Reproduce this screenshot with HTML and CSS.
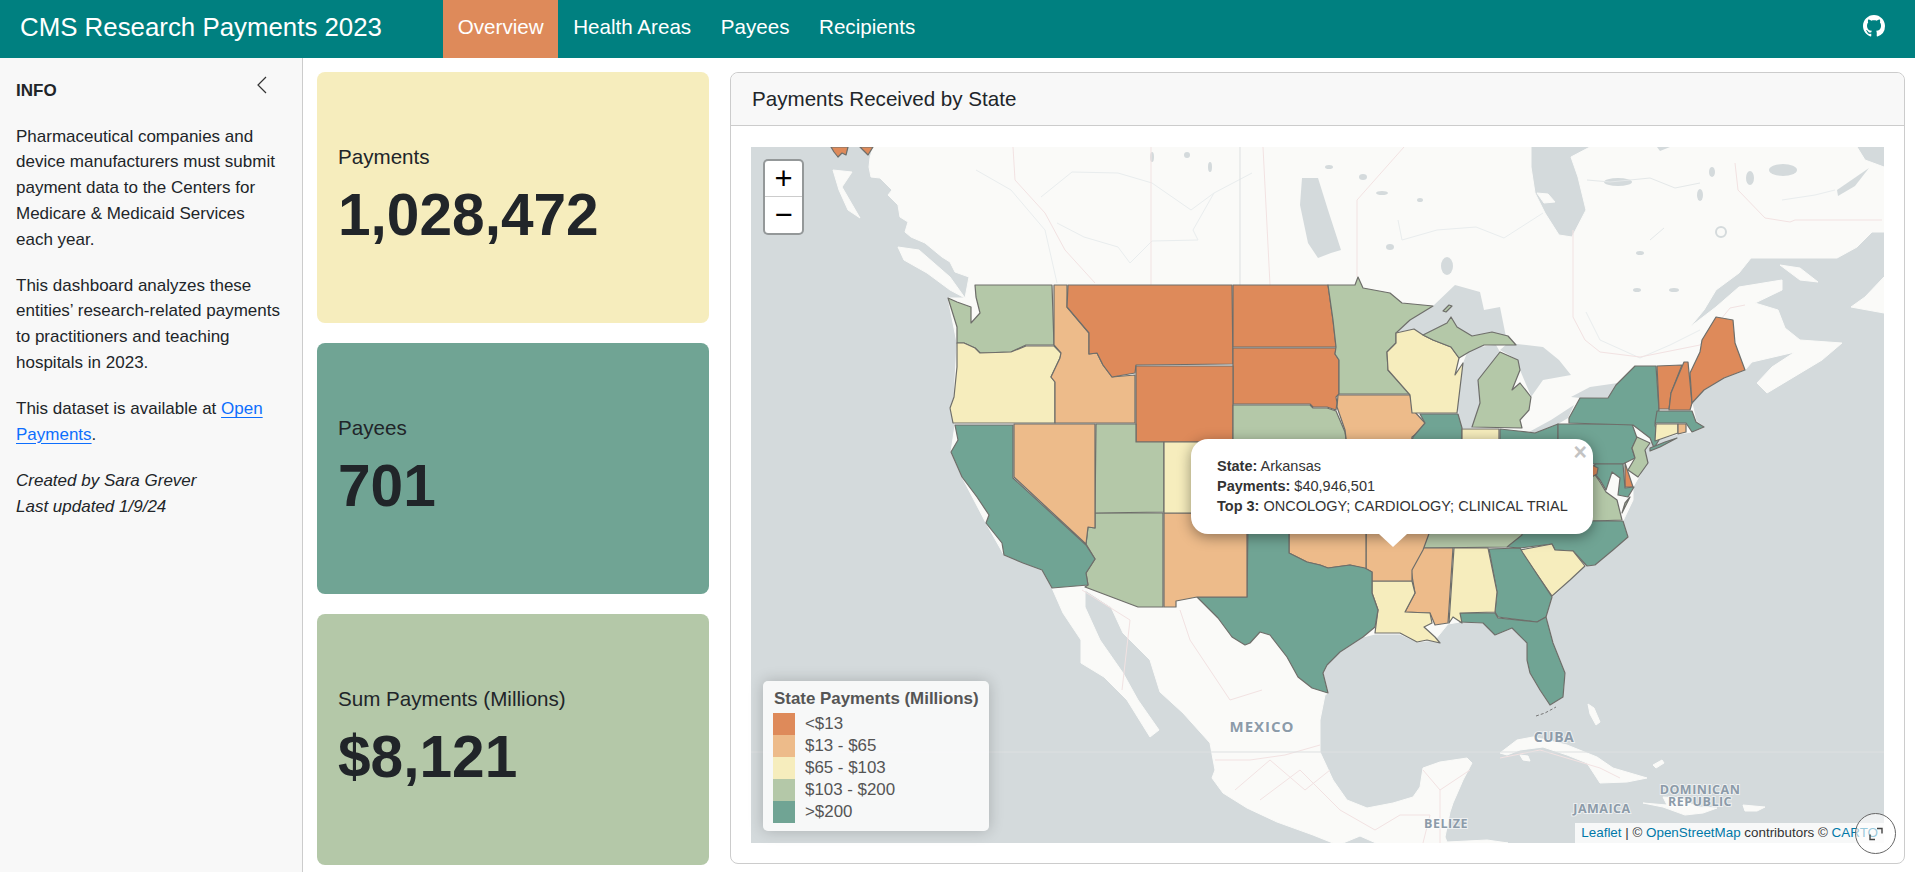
FILE: index.html
```html
<!DOCTYPE html>
<html lang="en">
<head>
  <meta charset="UTF-8">
  <title>CMS Research Payments 2023</title>
  <link rel="stylesheet" href="styles.css">
</head>
<body>

  <header class="navbar">
    <span class="brand">CMS Research Payments 2023</span>
    <nav class="nav-links">
      <a class="nav-link active" href="#">Overview</a>
      <a class="nav-link" href="#">Health Areas</a>
      <a class="nav-link" href="#">Payees</a>
      <a class="nav-link" href="#">Recipients</a>
    </nav>
    <a class="github" href="#" aria-label="GitHub">
      <svg viewBox="0 0 16 16" width="22" height="22"><path d="M8 0C3.58 0 0 3.58 0 8c0 3.54 2.29 6.53 5.47 7.59.4.07.55-.17.55-.38 0-.19-.01-.82-.01-1.49-2.01.37-2.53-.49-2.69-.94-.09-.23-.48-.94-.82-1.13-.28-.15-.68-.52-.01-.53.63-.01 1.08.58 1.23.82.72 1.21 1.87.87 2.33.66.07-.52.28-.87.51-1.07-1.78-.2-3.64-.89-3.64-3.95 0-.87.31-1.59.82-2.15-.08-.2-.36-1.02.08-2.12 0 0 .67-.21 2.2.82.64-.18 1.32-.27 2-.27.68 0 1.36.09 2 .27 1.53-1.04 2.2-.82 2.2-.82.44 1.1.16 1.92.08 2.12.51.56.82 1.27.82 2.15 0 3.07-1.87 3.75-3.65 3.95.29.25.54.73.54 1.48 0 1.07-.01 1.93-.01 2.2 0 .21.15.46.55.38A8.013 8.013 0 0016 8c0-4.42-3.58-8-8-8z"/></svg>
    </a>
  </header>

  <div class="page">
    <aside class="sidebar">
      <div class="sidebar-head">
        <h2>INFO</h2>
        <svg class="collapse-icon" viewBox="0 0 12 18" width="12" height="18"><path d="M10 1 2 9l8 8"/></svg>
      </div>
      <p>Pharmaceutical companies and device manufacturers must submit payment data to the Centers for Medicare &amp; Medicaid Services each year.</p>
      <p>This dashboard analyzes these entities’ research-related payments to practitioners and teaching hospitals in 2023.</p>
      <p>This dataset is available at <a href="#">Open Payments</a>.</p>
      <p><em>Created by Sara Grever<br>Last updated 1/9/24</em></p>
    </aside>

    <main class="content">
      <section class="value-boxes">
        <div class="value-box box-yellow">
          <div class="box-label">Payments</div>
          <div class="box-value">1,028,472</div>
        </div>
        <div class="value-box box-teal">
          <div class="box-label">Payees</div>
          <div class="box-value">701</div>
        </div>
        <div class="value-box box-green">
          <div class="box-label">Sum Payments (Millions)</div>
          <div class="box-value">$8,121</div>
        </div>
      </section>

      <section class="card">
        <div class="card-header">Payments Received by State</div>
        <div class="card-body">
          <div class="map">
            <svg class="map-svg" viewBox="751 147 1133 696" width="1133" height="696">
              <rect class="water" x="751" y="147" width="1133" height="696"/>

              <!-- land -->
              <polygon class="land" points="873,147 1531,147 1531,167 1535,193 1545,213 1559,235 1572,237 1586,210 1578,177 1571,157 1590,147 1857,147 1865,160 1884,167 1884,232 1872,232 1857,247 1837,258 1751,258 1739,273 1716,290 1704,310 1690,327 1716,307 1739,287 1782,280 1782,290 1755,303 1778,310 1785,328 1800,340 1842,343 1822,360 1767,393 1757,383 1772,367 1795,352 1752,362 1745,370 1723,378 1704,390 1692,403 1696,421 1704,427 1692,432 1678,434 1655,440 1640,450 1645,455 1640,475 1633,487 1633,500 1623,521 1628,537 1613,550 1595,565 1585,566 1570,580 1552,597 1546,617 1553,643 1565,673 1563,697 1550,705 1540,690 1530,673 1527,660 1527,643 1512,628 1495,635 1483,623 1460,622 1448,624 1435,640 1417,642 1400,634 1375,634 1363,637 1340,652 1327,665 1323,673 1328,693 1325,695 1320,720 1320,752 1333,780 1347,800 1367,808 1393,803 1413,797 1420,787 1423,768 1440,762 1467,758 1472,763 1463,780 1460,787 1453,803 1450,812 1445,837 1447,842 1487,840 1508,843 1376,843 1360,836 1343,843 1333,843 1313,835 1277,822 1247,808 1223,793 1212,778 1215,770 1210,743 1183,713 1160,692 1150,660 1123,633 1111,607 1085,590 1085,607 1100,640 1123,673 1138,700 1159,730 1150,737 1127,700 1104,677 1081,663 1081,640 1063,613 1052,588 1042,570 1004,555 986,523 962,477 951,452 955,425 950,408 954,397 957,343 948,298 965,298 969,277 955,272 950,262 942,257 925,243 911,237 905,232 908,222 900,217 898,205 888,195 892,190 880,178 871,177 869,167 870,158"/>
              <polygon class="land" points="898,247 919,250 950,277 965,298 950,290 927,273 904,260"/>
              <polygon class="land" points="833,170 852,172 842,187 860,218 848,210 839,190"/>
              <polygon class="land" points="1851,307 1865,297 1884,277 1884,313"/>
              <polygon class="land" points="1780,265 1800,268 1818,282 1800,280"/>
              <polygon class="land" points="1537,193 1548,194 1555,202 1544,203"/>
              <polygon class="land" points="1500,753 1517,740 1533,737 1567,745 1597,757 1613,768 1647,778 1627,782 1600,783 1587,763 1567,755 1543,747 1520,750 1507,755"/>
              <polygon class="land" points="1643,803 1667,805 1663,797 1680,798 1697,807 1717,808 1703,813 1685,815 1663,807"/>
              <polygon class="land" points="1743,805 1765,807 1757,811 1745,811"/>
              <polygon class="land" points="1520,755 1528,756 1530,761 1523,760"/>
              <polygon class="land" points="1588,704 1594,708 1600,722 1596,725 1590,714"/>
              <polygon class="land" points="1653,765 1662,760 1664,763 1656,768"/>

              <!-- lakes and rivers -->
              <polygon class="water" points="1433,306 1455,285 1480,292 1484,310 1500,307 1504,327 1506,337 1492,332 1472,336 1457,327 1451,317 1447,323 1423,335 1414,329 1398,332 1410,320"/>
              <polygon class="water" points="1469,348 1496,345 1500,352 1478,380 1480,403 1472,428 1461,428 1457,403 1463,363"/>
              <polygon class="water" points="1508,343 1543,347 1559,360 1571,375 1543,380 1531,397 1529,410 1520,420 1531,396 1520,370 1518,360 1500,350"/>
              <polygon class="water" points="1574,405 1551,420 1529,432 1535,433 1558,424 1568,418"/>
              <polygon class="water" points="1571,397 1590,387 1618,383 1610,397 1580,398"/>
              <polygon class="water" points="1302,178 1318,178 1328,210 1341,250 1331,253 1318,258 1308,243 1300,205"/>
              <polygon class="water" points="1657,147 1670,147 1660,151"/>
              <ellipse class="water" cx="1447" cy="266" rx="6" ry="9"/>
              <ellipse class="water" cx="1618" cy="182" rx="14" ry="4"/>
              <ellipse class="water" cx="1783" cy="170" rx="14" ry="6"/>
              <ellipse class="water" cx="1750" cy="178" rx="4" ry="7"/>
              <polygon class="water" points="1837,190 1869,168 1855,186 1838,196"/>
              <ellipse class="water" cx="1722" cy="292" rx="3" ry="3"/>
              <circle class="ring" cx="1721" cy="232" r="5"/>
              <ellipse class="water" cx="1152" cy="157" rx="2" ry="5"/>
              <ellipse class="water" cx="1187" cy="155" rx="3" ry="3"/>
              <ellipse class="water" cx="1210" cy="167" rx="2" ry="5"/>
              <ellipse class="water" cx="1329" cy="167" rx="4" ry="2"/>
              <ellipse class="water" cx="1363" cy="177" rx="4" ry="3"/>
              <ellipse class="water" cx="1382" cy="193" rx="6" ry="2"/>
              <ellipse class="water" cx="1420" cy="200" rx="3" ry="2"/>
              <ellipse class="water" cx="1390" cy="247" rx="4" ry="3"/>
              <ellipse class="water" cx="1674" cy="290" rx="5" ry="2"/>
              <ellipse class="water" cx="1637" cy="290" rx="4" ry="2"/>
              <ellipse class="water" cx="1640" cy="253" rx="4" ry="2"/>
              <ellipse class="water" cx="1700" cy="195" rx="3" ry="6"/>
              <ellipse class="water" cx="1712" cy="172" rx="3" ry="5"/>
              <path class="water-line" d="M1587 180 1610 182 1650 178 1675 188 1700 183 M1650 240 1664 228"/>
              <path class="river" d="M976 170 1011 190 1045 230 1057 283 M1041 197 1072 172 1118 173 1152 183 1191 210 1214 193 1252 173 M1057 223 1084 237 1118 247 1130 263 1152 241 1198 240 1193 230 1214 193 M1398 220 1402 240 1437 230 1476 227 1504 238 1543 213 M1586 312 1600 340 1640 358 1670 345 1700 330 M1782 200 1815 195 1835 190"/>
              <path class="border" d="M1013 147 1015 180 1045 213 1065 250 1095 283 M1151 147 1151 285 M1263 147 1270 285 M1404 147 1357 200 1357 277 M1573 230 1573 317 1585 340 1600 352 1640 357 M1735 163 1738 190 1765 218 1790 222 1795 220 1882 220 M1640 357 1700 345 1730 308 1745 305 M1082 590 1130 620 1122 690 M1180 610 1190 640 1230 700 1262 690 M1215 760 1250 760 1285 755 1320 745 M1235 790 1270 760 1305 790 1330 770 M1260 800 1300 770 1340 810 1375 830 1400 815 1430 815 1423 843 M1423 770 1440 790 1470 770 M1440 790 1440 843 M1500 758 1540 750 1600 768 1620 778"/>
              <path class="seam" d="M751 752H1884 M1240 147V285"/>

              <!-- alaska tip -->
              <polygon class="tier-1" points="831,147 848,147 846,155 842,153 838,157 834,152"/>
              <polygon class="tier-1" points="860,147 873,147 868,155 864,151"/>

              <!-- states -->
              <polygon class="tier-4" points="975,285 1052,285 1054,345 1026,345 1011,352 980,353 975,348 964,343 957,343 957,327 948,298 957,302 971,307 971,323 980,313 976,297"/>
              <polygon class="tier-3" points="957,343 964,343 975,348 980,353 1011,352 1026,346 1054,346 1061,353 1060,358 1051,377 1055,382 1055,423 953,423 950,408 954,397 957,367"/>
              <polygon class="tier-2" points="1054,285 1067,285 1067,307 1078,320 1089,333 1089,354 1097,353 1103,365 1112,377 1135,375 1135,423 1055,423 1055,382 1051,377 1060,358 1061,353 1054,345"/>
              <polygon class="tier-1" points="1068,285 1232,285 1233,364 1136,365 1135,373 1112,377 1103,365 1097,353 1089,354 1089,333 1078,320 1067,307"/>
              <polygon class="tier-1" points="1233,285 1328,285 1333,320 1336,347 1233,347"/>
              <polygon class="tier-1" points="1233,348 1336,348 1335,354 1339,360 1339,394 1336,397 1337,403 1336,410 1327,407 1313,407 1310,404 1233,404"/>
              <polygon class="tier-1" points="1136,366 1233,366 1233,442 1136,442"/>
              <polygon class="tier-4" points="1233,405 1310,405 1313,408 1327,408 1336,411 1345,432 1347,446 1233,446"/>
              <polygon class="tier-4" points="1328,285 1355,285 1358,277 1363,288 1390,293 1402,303 1433,306 1410,320 1396,333 1396,343 1387,352 1388,370 1410,394 1339,394 1339,360 1335,354 1336,347 1333,320"/>
              <polygon class="tier-2" points="1338,395 1410,395 1413,410 1425,423 1422,430 1412,437 1411,446 1347,446 1345,430 1337,407"/>
              <polygon class="tier-3" points="1396,333 1414,329 1423,335 1433,340 1451,347 1459,358 1455,375 1463,363 1457,413 1412,413 1410,395 1388,370 1387,352 1396,343"/>
              <polygon class="tier-4" points="1423,335 1447,323 1451,317 1457,327 1472,336 1492,332 1508,336 1516,345 1500,345 1484,345 1469,352 1459,358 1451,347 1433,340"/>
              <polygon class="tier-4" points="1472,427 1480,403 1478,380 1500,352 1518,360 1520,370 1512,390 1520,383 1531,397 1529,410 1520,420 1522,428"/>
              <polygon class="tier-4" points="1443,311 1449,305 1452,306 1446,312"/>
              <polygon class="tier-5" points="1420,414 1458,414 1462,428 1462,446 1411,446 1413,437 1425,423"/>
              <polygon class="tier-3" points="1462,429 1499,429 1499,446 1462,446"/>
              <polygon class="tier-5" points="1500,429 1518,431 1535,433 1558,424 1558,446 1500,446"/>
              <polygon class="tier-5" points="1558,424 1632,424 1637,438 1632,448 1635,458 1623,464 1593,464 1558,464"/>
              <polygon class="tier-5" points="1569,423 1569,418 1580,398 1608,398 1616,385 1635,366 1656,366 1659,410 1655,425 1659,440 1654,448 1650,438 1633,425"/>
              <polygon class="tier-5" points="1650,448 1665,442 1677,438 1660,447 1650,451"/>
              <polygon class="tier-1" points="1657,366 1682,365 1671,393 1669,409 1659,409"/>
              <polygon class="tier-1" points="1684,362 1688,362 1692,403 1690,410 1669,410 1671,393"/>
              <polygon class="tier-1" points="1690,373 1700,352 1702,340 1716,317 1733,320 1735,343 1745,370 1724,378 1704,390 1692,403"/>
              <polygon class="tier-5" points="1657,411 1692,411 1696,422 1704,427 1692,432 1686,423 1655,423"/>
              <polygon class="tier-3" points="1656,424 1678,424 1678,433 1655,441"/>
              <polygon class="tier-2" points="1678,424 1686,424 1686,432 1678,434"/>
              <polygon class="tier-4" points="1637,437 1650,443 1645,450 1648,463 1638,477 1628,470 1635,458 1632,448"/>
              <polygon class="tier-1" points="1625,463 1633,487 1625,487"/>
              <polygon class="tier-5" points="1595,464 1623,464 1625,488 1634,487 1628,497 1618,495 1620,478 1612,472 1606,490 1600,480 1593,472"/>
              <polygon class="tier-4" points="1593,472 1600,482 1606,492 1617,500 1622,520 1593,521 1545,521 1540,500 1570,490 1580,478"/>
              <polygon class="tier-4" points="1625,503 1630,497 1622,513"/>
              <polygon class="tier-1" points="1590,464 1598,468 1597,474 1590,478"/>
              <polygon class="tier-5" points="1507,547 1522,532 1545,521 1623,521 1628,537 1613,550 1595,565 1587,566 1573,551 1555,550 1552,544 1520,548"/>
              <polygon class="tier-4" points="1430,530 1522,530 1522,535 1507,547 1423,548"/>
              <polygon class="tier-3" points="1520,550 1552,544 1555,550 1573,551 1585,566 1570,580 1552,596"/>
              <polygon class="tier-5" points="1489,549 1520,548 1523,553 1552,597 1546,617 1537,622 1498,617 1495,612 1497,592"/>
              <polygon class="tier-5" points="1460,613 1495,613 1498,618 1537,622 1546,617 1553,643 1565,673 1563,697 1550,705 1540,690 1530,673 1527,660 1527,643 1512,628 1495,635 1483,623 1460,622"/>
              <polygon class="tier-3" points="1454,548 1488,548 1497,592 1495,612 1460,613 1462,623 1453,617 1449,623"/>
              <polygon class="tier-2" points="1415,548 1453,548 1448,623 1435,625 1430,613 1405,612 1415,593 1411,570"/>
              <polygon class="tier-3" points="1372,581 1412,581 1415,593 1405,612 1430,613 1432,623 1424,627 1435,637 1440,643 1427,640 1417,642 1400,633 1375,633 1378,610 1372,593"/>
              <polygon class="tier-2" points="1366,520 1434,520 1423,550 1412,570 1412,581 1372,581 1372,572 1366,569"/>
              <polygon class="tier-2" points="1289,520 1366,520 1366,569 1350,565 1328,568 1320,565 1307,562 1289,553"/>
              <polygon class="tier-5" points="1248,520 1289,520 1289,553 1307,562 1320,565 1328,568 1350,565 1365,568 1372,572 1372,593 1378,610 1375,627 1363,637 1340,652 1327,665 1323,673 1328,693 1312,688 1298,677 1287,657 1270,635 1260,632 1250,643 1245,645 1232,637 1218,618 1197,597 1247,597"/>
              <polygon class="tier-2" points="1164,513 1247,513 1247,597 1197,597 1176,601 1176,607 1164,607"/>
              <polygon class="tier-4" points="1095,513 1163,513 1163,607 1138,607 1085,587 1088,585 1086,573 1095,559 1086,544 1088,527 1095,528"/>
              <polygon class="tier-4" points="1096,424 1136,424 1136,442 1164,442 1164,512 1095,513"/>
              <polygon class="tier-3" points="1164,442 1290,442 1290,513 1164,513"/>
              <polygon class="tier-2" points="1014,424 1095,424 1095,528 1088,527 1086,544 1014,477"/>
              <polygon class="tier-5" points="955,425 1013,425 1013,478 1086,545 1095,559 1086,573 1088,585 1052,588 1042,570 1023,563 1004,555 1002,543 986,523 989,515 977,497 962,477 951,452 958,440"/>
              <path class="keys" d="M1536 716 1545 713 1556 707"/>

              <!-- place labels -->
              <text class="place place-lg" x="1262" y="732">MEXICO</text>
              <text class="place" x="1554" y="742">CUBA</text>
              <text class="place place-sm" x="1446" y="828">BELIZE</text>
              <text class="place place-sm" x="1700" y="794">DOMINICAN</text>
              <text class="place place-sm" x="1700" y="806">REPUBLIC</text>
              <text class="place place-sm" x="1602" y="813">JAMAICA</text>
            </svg>

            <div class="zoom-control">
              <a href="#">+</a>
              <a href="#">−</a>
            </div>

            <div class="legend">
              <div class="legend-title">State Payments (Millions)</div>
              <div class="legend-row"><i class="swatch tier-bg-1"></i>&lt;$13</div>
              <div class="legend-row"><i class="swatch tier-bg-2"></i>$13 - $65</div>
              <div class="legend-row"><i class="swatch tier-bg-3"></i>$65 - $103</div>
              <div class="legend-row"><i class="swatch tier-bg-4"></i>$103 - $200</div>
              <div class="legend-row"><i class="swatch tier-bg-5"></i>&gt;$200</div>
            </div>

            <div class="popup">
              <span class="popup-close">×</span>
              <div><b>State:</b> Arkansas</div>
              <div><b>Payments:</b> $40,946,501</div>
              <div><b>Top 3:</b> ONCOLOGY; CARDIOLOGY; CLINICAL TRIAL</div>
              <span class="popup-tip"></span>
            </div>

            <div class="attribution"><a href="#">Leaflet</a> | © <a href="#">OpenStreetMap</a> contributors © <a href="#">CARTO</a></div>

            <button class="expand" aria-label="Expand">
              <svg viewBox="0 0 16 16" width="16" height="16"><path d="M9 2.5h5v5 M7 13.5H2v-5"/></svg>
            </button>
          </div>
        </div>
      </section>
    </main>
  </div>

</body>
</html>
```

FILE: styles.css
```css
* {
  box-sizing: border-box;
}

html, body {
  height: 100%;
}

body {
  margin: 0;
  font-family: "Liberation Sans", Arial, sans-serif;
  font-size: 17px;
  line-height: 25.7px;
  color: #212529;
  background: #fff;
  overflow: hidden;
  display: flex;
  flex-direction: column;
}

.navbar {
  flex: 0 0 58px;
  display: flex;
  align-items: stretch;
  background: #008080;
  color: #fff;
  padding-left: 20px;
  padding-right: 30px;
}

.brand {
  font-size: 25.85px;
  line-height: 54px;
  width: 423px;
}

.nav-links {
  display: flex;
  flex: 1;
}

.nav-link {
  color: #fff;
  text-decoration: none;
  font-size: 20.6px;
  line-height: 54px;
  padding: 0 14.8px;
}

.nav-link.active {
  background: #de8a5a;
}

.github {
  display: flex;
  align-items: center;
  padding-bottom: 6px;
}

.github svg {
  fill: #fff;
}

.page {
  flex: 1;
  display: flex;
  min-height: 0;
}

.sidebar {
  flex: 0 0 303px;
  background: #f8f8f8;
  border-right: 1px solid #ccc;
  padding: 15px 16px;
}

.sidebar-head {
  display: flex;
  justify-content: space-between;
  align-items: flex-start;
  margin-bottom: 20px;
}

.sidebar h2 {
  margin: 5px 0 0;
  font-size: 17px;
  font-weight: 700;
  line-height: 25.7px;
}

.collapse-icon {
  margin: 3px 18px 0 0;
  fill: none;
  stroke: #333;
  stroke-width: 1.2;
}

.sidebar p {
  margin: 0 0 20.5px;
}

.sidebar a {
  color: #0d6efd;
  text-underline-offset: 3px;
}

.content {
  flex: 1;
  display: flex;
  gap: 21px;
  padding: 14px 10px 0 14px;
  min-width: 0;
}

.value-boxes {
  flex: 0 0 392px;
  display: flex;
  flex-direction: column;
  gap: 20px;
}

.value-box {
  height: 251px;
  flex: none;
  border-radius: 8px;
  padding: 1px 21px 0;
  display: flex;
  flex-direction: column;
  justify-content: center;
}

.box-yellow { background: #f6edbd; }
.box-teal { background: #70a494; }
.box-green { background: #b4c8a8; }

.box-label {
  font-size: 20.6px;
  line-height: 1.2;
  margin-bottom: 10px;
}

.box-value {
  font-size: 58.6px;
  font-weight: 700;
  line-height: 1.2;
}

.card {
  flex: 1;
  height: 792px;
  border: 1px solid #ccc;
  border-radius: 8px;
  display: flex;
  flex-direction: column;
}

.card-header {
  flex: 0 0 53px;
  background: #f8f8f8;
  border-bottom: 1px solid #ccc;
  border-radius: 8px 8px 0 0;
  font-size: 20.6px;
  line-height: 52px;
  padding-left: 21px;
}

.card-body {
  flex: 1;
  padding: 21px 20px 0 20px;
}

.map {
  position: relative;
  width: 1133px;
  height: 696px;
}

.map-svg {
  display: block;
}

.water { fill: #d4dadc; }
.land { fill: #fafaf8; stroke: #fafaf8; stroke-width: 1; stroke-linejoin: round; }
.ring { fill: none; stroke: #d4dadc; stroke-width: 2; }
.water-line { fill: none; stroke: #e4e8e9; stroke-width: 1; }
.river { fill: none; stroke: #e9edee; stroke-width: 1; }
.border { fill: none; stroke: #f2e2e2; stroke-width: 1; }
.seam { fill: none; stroke: #dde0e1; stroke-width: 1; }
.keys { fill: none; stroke: #777; stroke-width: 1; stroke-dasharray: 3 2; }

.tier-1, .tier-2, .tier-3, .tier-4, .tier-5 {
  stroke: #6e6e6a;
  stroke-width: 1.2;
  stroke-linejoin: round;
}

.tier-1 { fill: #de8a5a; }
.tier-2 { fill: #edbb8a; }
.tier-3 { fill: #f6edbd; }
.tier-4 { fill: #b4c8a8; }
.tier-5 { fill: #70a494; }

.tier-bg-1 { background: #de8a5a; }
.tier-bg-2 { background: #edbb8a; }
.tier-bg-3 { background: #f6edbd; }
.tier-bg-4 { background: #b4c8a8; }
.tier-bg-5 { background: #70a494; }

.place {
  font-family: "Open Sans", "Liberation Sans", sans-serif;
  font-weight: 700;
  font-size: 14px;
  letter-spacing: 0.5px;
  fill: #8c9ba9;
  stroke: #fff;
  stroke-width: 2px;
  stroke-opacity: 0.6;
  paint-order: stroke;
  text-anchor: middle;
}

.place-lg {
  font-size: 15px;
  letter-spacing: 1px;
}

.place-sm {
  font-size: 12.5px;
}

.zoom-control {
  position: absolute;
  left: 12px;
  top: 12px;
  width: 41px;
  border: 2px solid rgba(0,0,0,0.3);
  border-radius: 5px;
  background: #fff;
  background-clip: padding-box;
}

.zoom-control a {
  display: block;
  height: 36px;
  color: #000;
  font: 400 31px/36px "Liberation Sans", sans-serif;
  text-align: center;
  text-decoration: none;
}

.zoom-control a:first-child {
  border-bottom: 1px solid #ccc;
}

.legend {
  position: absolute;
  left: 12px;
  top: 534px;
  width: 226px;
  height: 150px;
  padding: 7px 10px;
  background: rgba(255,255,255,0.8);
  border-radius: 5px;
  box-shadow: 0 0 15px rgba(0,0,0,0.2);
  color: #555;
  font-size: 16.9px;
  line-height: 22px;
}

.legend-title {
  font-weight: 700;
  padding-left: 1px;
  margin-bottom: 3px;
}

.legend-row {
  display: flex;
  align-items: center;
  height: 22px;
}

.swatch {
  width: 22px;
  height: 22px;
  margin-right: 10px;
}

.popup {
  position: absolute;
  left: 440px;
  top: 292px;
  width: 402px;
  height: 95px;
  padding: 17px 20px 17px 26px;
  background: #fff;
  border-radius: 17px;
  box-shadow: 0 3px 14px rgba(0,0,0,0.4);
  font-size: 14.5px;
  line-height: 20px;
  color: #333;
  white-space: nowrap;
}

.popup-close {
  position: absolute;
  right: 6px;
  top: 2px;
  color: #c3c3c3;
  font: 700 23px/23px "Liberation Sans", sans-serif;
}

.popup-tip {
  position: absolute;
  left: 188px;
  top: 95px;
  width: 0;
  height: 0;
  border-left: 14px solid transparent;
  border-right: 14px solid transparent;
  border-top: 13px solid #fff;
}

.attribution {
  position: absolute;
  right: 0;
  bottom: 0;
  height: 20px;
  padding: 0 6px;
  background: rgba(255,255,255,0.8);
  font-size: 13.4px;
  line-height: 20px;
  color: #333;
}

.attribution a {
  color: #0078a8;
  text-decoration: none;
}

.expand {
  position: absolute;
  right: -12px;
  bottom: -11px;
  width: 41px;
  height: 41px;
  padding: 0;
  border: 1px solid #666;
  border-radius: 50%;
  background: rgba(255,255,255,0.6);
  display: flex;
  align-items: center;
  justify-content: center;
}

.expand svg {
  fill: none;
  stroke: #444;
  stroke-width: 1.4;
}
```
